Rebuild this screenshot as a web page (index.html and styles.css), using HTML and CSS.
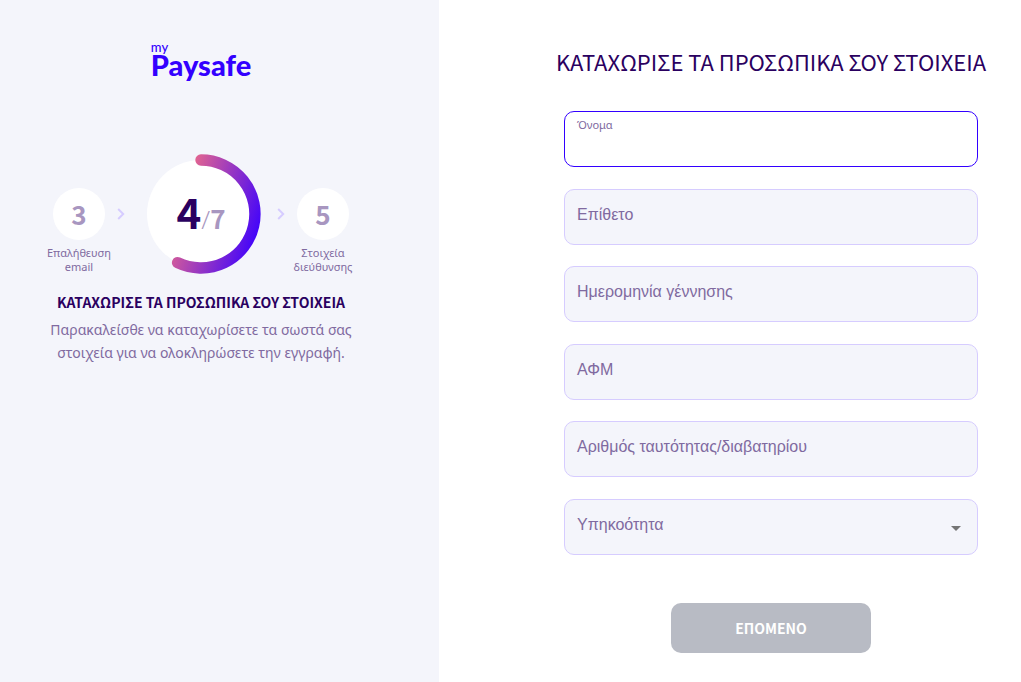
FILE: index.html
```html
<!DOCTYPE html>
<html lang="el">
<head>
<meta charset="utf-8">
<meta name="viewport" content="width=device-width, initial-scale=1">
<title>my Paysafe</title>
<link rel="stylesheet" href="styles.css">
</head>
<body>
<div class="page">
  <aside class="sidebar">
    <div class="brand"><span class="brand-my">my</span><span class="brand-name">Paysafe</span></div>
    <div class="steps">
      <div class="step">
        <span class="step-circle">3</span>
        <span class="step-label">Επαλήθευση email</span>
      </div>
      <svg class="chevron" viewBox="0 0 8 12" aria-hidden="true"><path d="M1.200 1 6.200 6l-5 5"/></svg>
      <div class="ring">
        <svg class="ring-art" viewBox="0 0 120 120" aria-hidden="true">
          <defs>
            <linearGradient id="arc" gradientUnits="userSpaceOnUse" x1="36" y1="48" x2="122" y2="76">
              <stop offset="0" stop-color="#e8688c"/>
              <stop offset="1" stop-color="#3c00ff"/>
            </linearGradient>
          </defs>
          <circle cx="60" cy="60" r="54" fill="#fff"/>
          <path d="M60 6A54 54 0 1 1 36.600 108.700" fill="none" stroke="url(#arc)" stroke-width="11.400" stroke-linecap="round"/>
        </svg>
        <div class="ring-text"><span class="ring-now">4</span><span class="ring-slash">/</span><span class="ring-total">7</span></div>
      </div>
      <svg class="chevron" viewBox="0 0 8 12" aria-hidden="true"><path d="M1.200 1 6.200 6l-5 5"/></svg>
      <div class="step">
        <span class="step-circle">5</span>
        <span class="step-label">Στοιχεία διεύθυνσης</span>
      </div>
    </div>
    <h2 class="side-title">ΚΑΤΑΧΩΡΙΣΕ ΤΑ ΠΡΟΣΩΠΙΚΑ ΣΟΥ ΣΤΟΙΧΕΙΑ</h2>
    <p class="side-text">Παρακαλείσθε να καταχωρίσετε τα σωστά σας στοιχεία για να ολοκληρώσετε την εγγραφή.</p>
  </aside>
  <main class="main">
    <h1 class="title">ΚΑΤΑΧΩΡΙΣΕ ΤΑ ΠΡΟΣΩΠΙΚΑ ΣΟΥ ΣΤΟΙΧΕΙΑ</h1>
    <form class="form">
      <div class="fields">
        <div class="field field-active"><label for="first">Όνομα</label><input id="first" type="text"></div>
        <div class="field"><label for="last">Επίθετο</label><input id="last" type="text"></div>
        <div class="field"><label for="birth">Ημερομηνία γέννησης</label><input id="birth" type="text"></div>
        <div class="field"><label for="tax">ΑΦΜ</label><input id="tax" type="text"></div>
        <div class="field"><label for="idnum">Αριθμός ταυτότητας/διαβατηρίου</label><input id="idnum" type="text"></div>
        <div class="field">
          <label for="nation">Υπηκοότητα</label>
          <select id="nation"><option value=""></option></select>
          <svg class="caret" viewBox="0 0 10 5" aria-hidden="true"><path d="M0 0h10L5 5z"/></svg>
        </div>
      </div>
      <button class="next" type="submit" disabled>ΕΠΟΜΕΝΟ</button>
    </form>
  </main>
</div>
</body>
</html>
```

FILE: styles.css
```css
* { box-sizing: border-box; }

body {
  margin: 0;
  background: #fff;
  color: #2a0060;
  font-family: "Noto Sans CJK JP", "Noto Sans", sans-serif;
}

.page {
  display: grid;
  grid-template-columns: 43% minmax(0, 1fr);
  min-height: 100vh;
}

.sidebar {
  display: flex;
  flex-direction: column;
  align-items: center;
  padding: 40px 57px 40px 20px;
  background: #f4f5fb;
}

.brand {
  display: flex;
  flex-direction: column;
  color: #3300ff;
  font-family: Lato, sans-serif;
}
.brand-my { font-size: 13px; line-height: 14px; font-weight: 500; }
.brand-name { font-size: 29px; line-height: 22px; font-weight: 900; }

.steps {
  display: flex;
  align-items: flex-start;
  justify-content: center;
  margin-top: 78px;
}
.step {
  display: flex;
  flex-direction: column;
  align-items: center;
  width: 68px;
  padding-top: 34px;
}
.step-circle {
  width: 52px;
  height: 52px;
  border-radius: 50%;
  background: #fff;
  color: #a896c0;
  font-size: 26px;
  line-height: 52px;
  font-weight: 700;
  text-align: center;
}
.step-label {
  margin-top: 6px;
  color: #806aa0;
  font-family: "Noto Sans", sans-serif;
  font-size: 11px;
  line-height: 14px;
  text-align: center;
}
.chevron {
  width: 8px;
  height: 12px;
  margin: 54px 16px 0 4px;
  fill: none;
  stroke: #d6ccff;
  stroke-width: 2;
}
.ring + .chevron { margin: 54px 4px 0 16px; }
.ring { display: grid; width: 120px; height: 120px; }
.ring-art, .ring-text { grid-area: 1 / 1; }
.ring-art { width: 120px; height: 120px; }
.ring-text {
  display: flex;
  align-items: baseline;
  justify-content: center;
  line-height: 114px;
  font-size: 26px;
  color: #a896c0;
  z-index: 1;
}
.ring-now { color: #2a0060; font-size: 42px; font-weight: 700; }
.ring-slash { font-family: "Open Sans", sans-serif; font-size: 26px; font-weight: 300; }
.ring-total { font-weight: 700; }

.side-title {
  margin: 17px 0 0;
  font-size: 14px;
  line-height: 22px;
  font-weight: 700;
  white-space: nowrap;
}
.side-text {
  max-width: 320px;
  margin: 5px 0 0;
  color: #806aa0;
  font-family: "Noto Sans", sans-serif;
  font-size: 14px;
  line-height: 23px;
  text-align: center;
}

.main {
  display: flex;
  flex-direction: column;
  align-items: center;
  padding: 43px 34px 29px 116px;
}
.title {
  margin: 0;
  font-size: 22px;
  line-height: 36px;
  font-weight: 400;
  white-space: nowrap;
}
.form {
  display: flex;
  flex-direction: column;
  align-items: center;
  width: 100%;
  margin-top: 32px;
  padding: 0 9px;
}
.fields {
  display: grid;
  align-content: space-between;
  width: 100%;
  min-height: 444px;
}
.field {
  display: grid;
  grid-template-columns: 1fr auto;
  height: 56px;
  border: 1px solid #d6ccff;
  border-radius: 10px;
  background: #f4f5fb;
}
.field label {
  grid-area: 1 / 1;
  align-self: start;
  padding: 15px 12px;
  color: #806aa0;
  font-family: "Liberation Sans", Arial, sans-serif;
  font-size: 16px;
  line-height: 20px;
  pointer-events: none;
  z-index: 1;
}
.field input, .field select {
  grid-area: 1 / 1 / 2 / 3;
  width: 100%;
  min-width: 0;
  padding: 16px 12px 0;
  border: 0;
  outline: 0;
  background: transparent;
  color: #2a0060;
  font: 16px "Liberation Sans", Arial, sans-serif;
  appearance: none;
}
.caret {
  grid-area: 1 / 2;
  align-self: center;
  width: 10px;
  height: 5px;
  margin: 3px 16px 0 0;
  fill: #757575;
  pointer-events: none;
}
.field-active { border-color: #3300ff; background: #fff; }
.field-active label {
  padding: 5px 12px;
  font-family: "Noto Sans", sans-serif;
  font-size: 11px;
  line-height: 16px;
}
.next {
  width: 200px;
  height: 50px;
  margin-top: 48px;
  border: 0;
  border-radius: 10px;
  background: #b8bbc4;
  color: #fff;
  font-family: inherit;
  font-size: 14px;
  font-weight: 700;
}
```
